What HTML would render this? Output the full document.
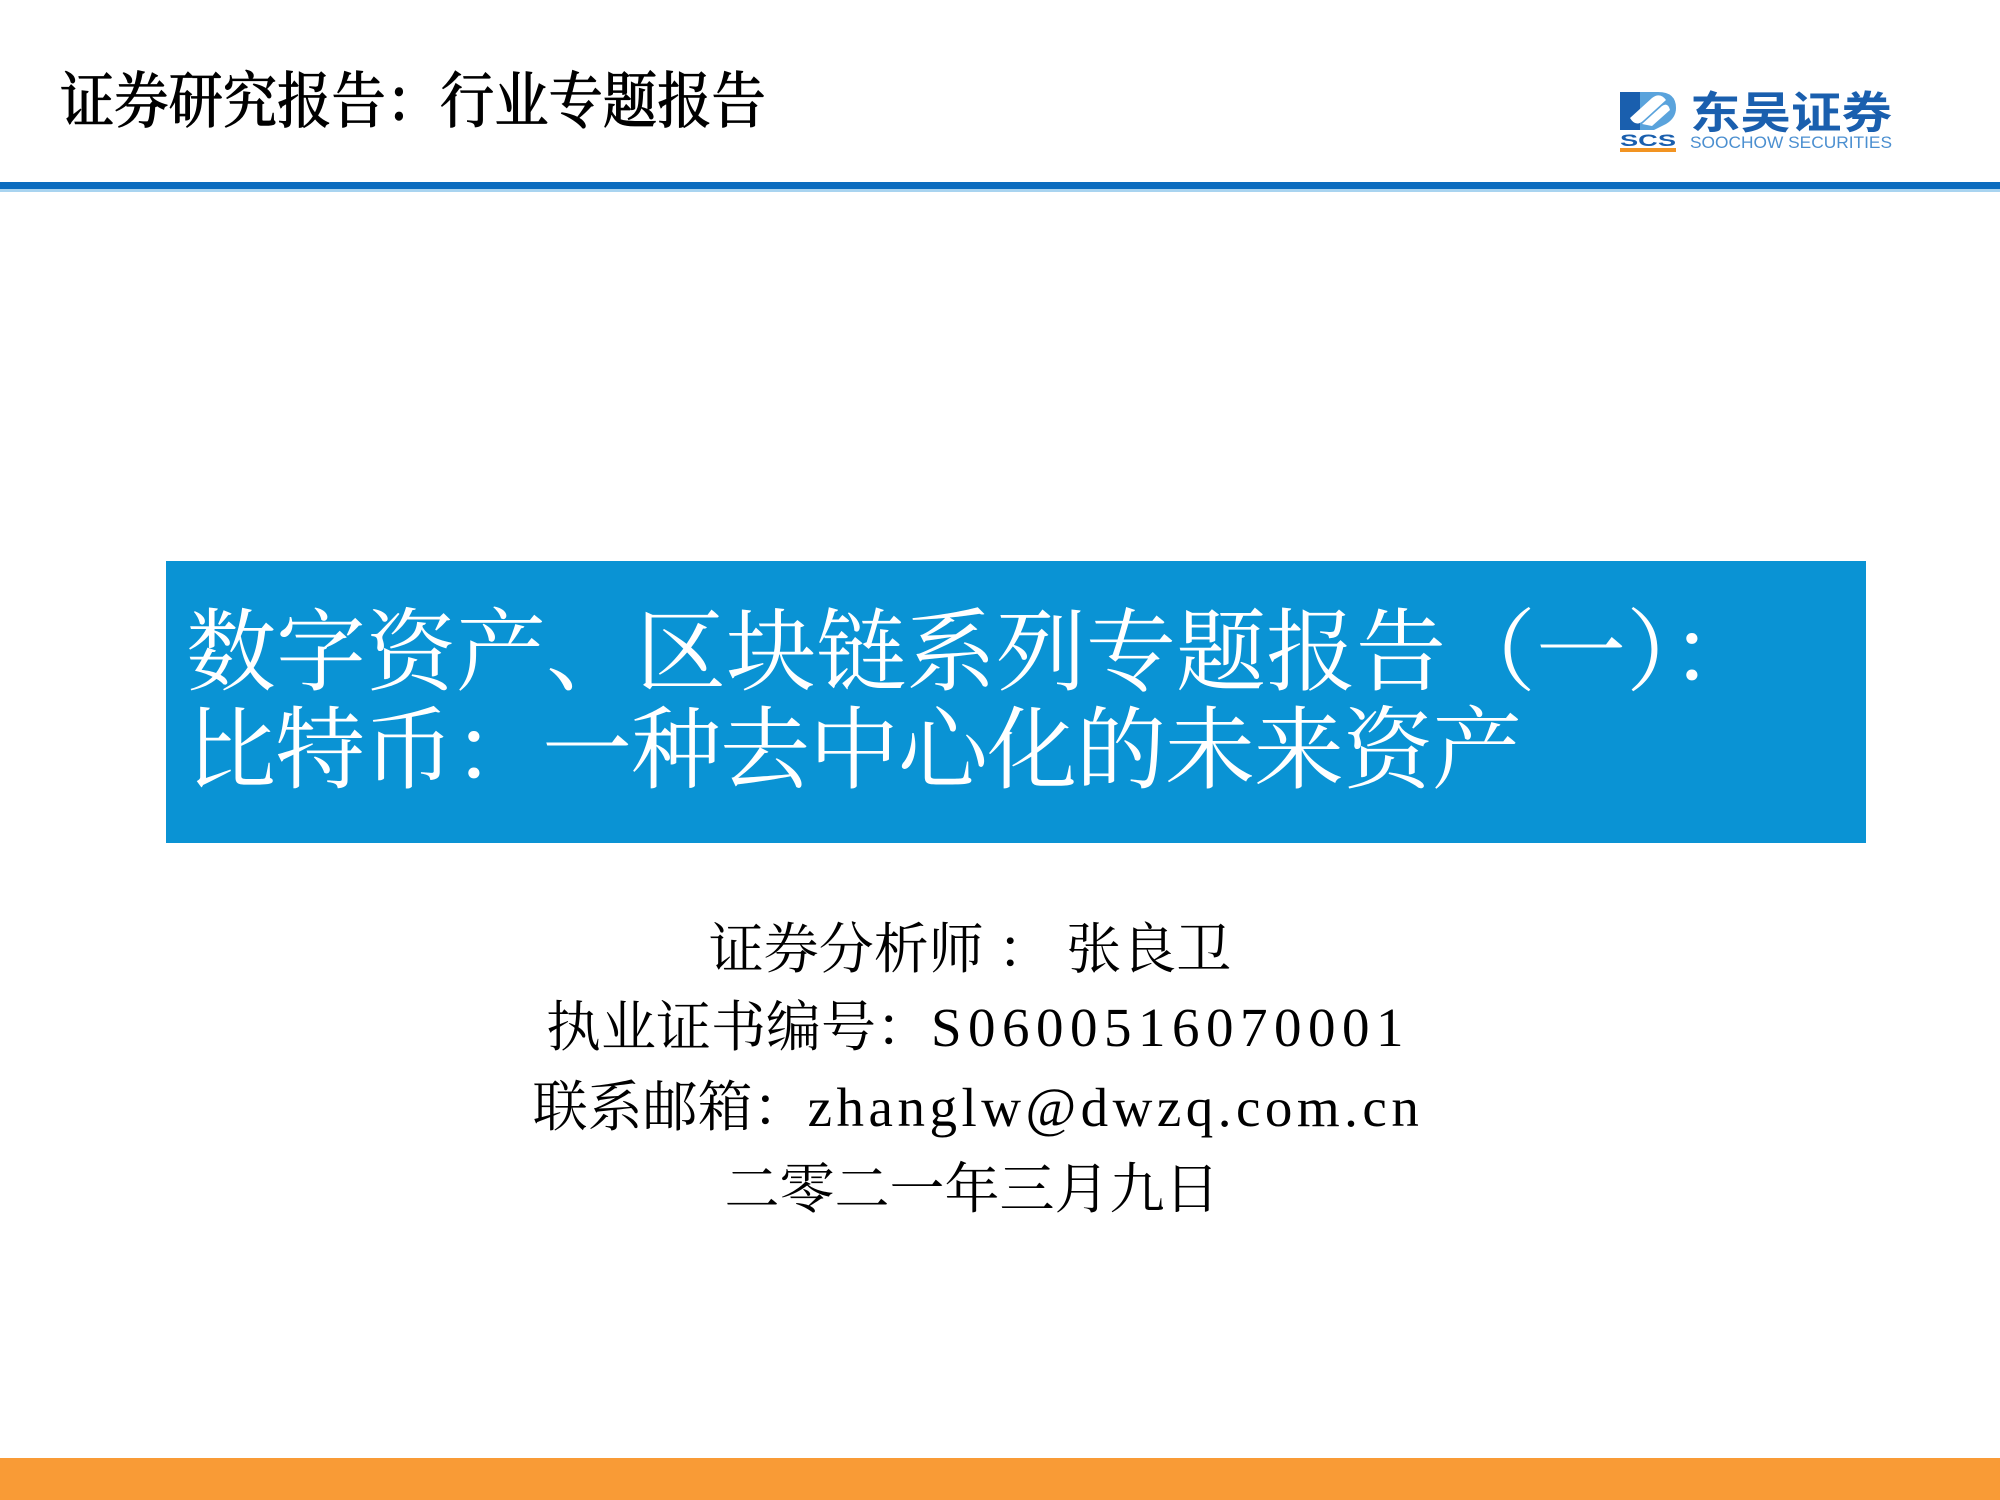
<!DOCTYPE html>
<html><head><meta charset="utf-8"><style>
html,body{margin:0;padding:0;}
body{width:2000px;height:1500px;position:relative;background:#fff;overflow:hidden;font-family:"Liberation Serif","Noto Serif CJK SC",serif;}
.hdr{position:absolute;left:60px;top:68px;font-size:61px;line-height:70px;color:#000;white-space:nowrap;transform:scaleX(0.89);transform-origin:0 0;font-weight:500;-webkit-text-stroke:0.8px #000;}
.line{position:absolute;left:0;top:182px;width:2000px;height:7px;background:#0b6cbf;}
.line2{position:absolute;left:0;top:189px;width:2000px;height:3px;background:#a9d4f0;}
.box{position:absolute;left:166px;top:561px;width:1700px;height:282px;background:#0a93d4;}
.t{position:absolute;left:186px;color:#fff;font-size:90px;line-height:100px;white-space:nowrap;}
.c{position:absolute;left:-25px;width:2000px;text-align:center;font-size:55px;line-height:60px;color:#000;white-space:nowrap;}
.lat{letter-spacing:7px;}
.bot{position:absolute;left:0;top:1458px;width:2000px;height:42px;background:#f99b36;}
</style></head><body>
<div class="hdr">证券研究报告：行业专题报告</div>
<svg style="position:absolute;left:1618px;top:88px" width="280" height="66" viewBox="0 0 280 66">
<rect x="2" y="4" width="20" height="38" fill="#1a5fae"/>
<path d="M22 4 H40 Q58 4 58 20 Q58 30 48 36 L36 42 H22 Z" fill="#5aa3dc"/>
<path d="M12 30 L34 10 Q42 4 48 12 L26 32 Q18 40 12 30 Z" fill="#fff"/>
<path d="M24 36 L44 18 Q50 14 52 22 L34 38 Z" fill="#fff"/>
<text x="2" y="58" font-family="Liberation Sans,sans-serif" font-weight="bold" font-size="17" fill="#1a5fae" textLength="56" lengthAdjust="spacingAndGlyphs">SCS</text>
<rect x="2" y="60" width="56" height="4" fill="#f29422"/>
<text x="72" y="40" font-family="Liberation Sans,'Noto Sans CJK SC',sans-serif" font-weight="bold" font-size="44" fill="#1a5fae" textLength="202" lengthAdjust="spacingAndGlyphs">东吴证券</text>
<text x="72" y="60" font-family="Liberation Sans,sans-serif" font-size="17" fill="#4b8fd0" textLength="202" lengthAdjust="spacingAndGlyphs">SOOCHOW SECURITIES</text>
</svg>
<div class="line"></div><div class="line2"></div>
<div class="box"></div>
<div class="t" style="top:604px">数字资产、区块链系列专题报告（一）：</div>
<div class="t" style="top:702px;letter-spacing:-1px">比特币：一种去中心化的未来资产</div>
<div class="c" style="top:920px;left:-30px">证券分析师 ： 张良卫</div>
<div class="c" style="top:998px;left:-22px">执业证书编号：<span class="lat" style="letter-spacing:6.5px">S0600516070001</span></div>
<div class="c" style="top:1078px;left:-22px">联系邮箱：<span class="lat" style="letter-spacing:4.5px">zhanglw@dwzq.com.cn</span></div>
<div class="c" style="top:1160px;left:-28px">二零二一年三月九日</div>
<div class="bot"></div>
</body></html>
